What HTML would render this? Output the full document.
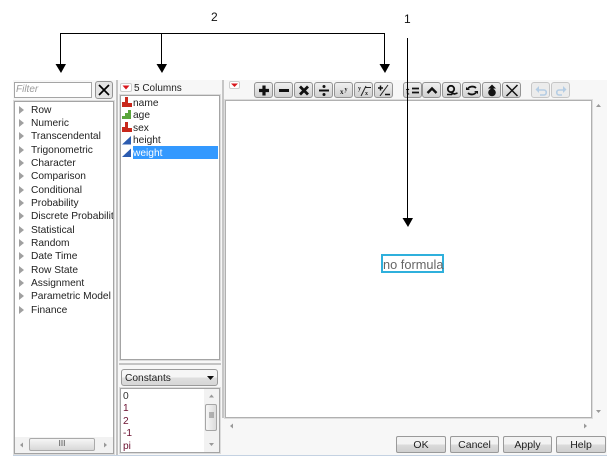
<!DOCTYPE html>
<html><head><meta charset="utf-8">
<style>
html,body{margin:0;padding:0;background:#fff}
body{width:610px;height:457px;position:relative;overflow:hidden;font-family:"Liberation Sans",sans-serif;font-size:10.2px;color:#222}
#w{position:absolute;left:0;top:0;width:610px;height:457px;filter:blur(.3px)}
.a{position:absolute}
.box{position:absolute;background:#fff;border:1px solid #a4a4a4;box-shadow:0 0 0 1px #dcdcdc;box-sizing:border-box}
.t{position:absolute;white-space:nowrap;line-height:13px}
.tri{position:absolute;width:0;height:0;border-style:solid;border-width:4px 0 4px 5px;border-color:transparent transparent transparent #a0a0a0}
.btn{position:absolute;top:82px;width:19px;height:16px;box-sizing:border-box;border:1px solid #949494;border-radius:3px;background:linear-gradient(#f0f0f0,#d0d0d0);overflow:hidden}
.btn svg{position:absolute;left:0;top:0}
.pb{position:absolute;top:436px;height:17px;box-sizing:border-box;border:1px solid #9a9a9a;border-radius:2px;background:linear-gradient(#f3f3f3 45%,#dadada 55%,#cfcfcf);text-align:center;font-size:10.5px;line-height:16px;color:#222}
.k{position:absolute;background:#000}
.c{position:absolute;left:123px;font-size:10.2px;color:#6a1030;line-height:12px}
</style></head><body><div id="w">
<div class="a" style="left:13px;top:80px;width:594px;height:375px;background:#f7f7f7"></div>
<div class="a" style="left:13px;top:455px;width:594px;height:1px;background:#c4d2e2"></div>
<div class="a" style="left:116px;top:80px;width:2px;height:375px;background:#c4c4c4"></div>
<div class="a" style="left:222px;top:80px;width:2px;height:338px;background:#c6c6c6"></div>

<div class="box" style="left:14px;top:82px;width:78px;height:16px;border-color:#a5a5a5;box-shadow:none"></div>
<div class="t" style="left:16px;top:83px;font-style:italic;color:#9b9b9b;font-size:10px">Filter</div>
<div class="btn" style="left:95px;top:81px;width:18px;height:18px;background:#e4e4e4"><svg width="16" height="16"><path d="M3 3L13 13M13 3L3 13" stroke="#000" stroke-width="1.700"/></svg></div>

<div class="box" style="left:14px;top:101px;width:100px;height:353px;overflow:hidden">
<div class="t" style="left:16px;top:2px">Row</div>
<div class="t" style="left:16px;top:15px">Numeric</div>
<div class="t" style="left:16px;top:28px">Transcendental</div>
<div class="t" style="left:16px;top:42px">Trigonometric</div>
<div class="t" style="left:16px;top:55px">Character</div>
<div class="t" style="left:16px;top:68px">Comparison</div>
<div class="t" style="left:16px;top:82px">Conditional</div>
<div class="t" style="left:16px;top:95px">Probability</div>
<div class="t" style="left:16px;top:108px">Discrete Probability</div>
<div class="t" style="left:16px;top:122px">Statistical</div>
<div class="t" style="left:16px;top:135px">Random</div>
<div class="t" style="left:16px;top:148px">Date Time</div>
<div class="t" style="left:16px;top:162px">Row State</div>
<div class="t" style="left:16px;top:175px">Assignment</div>
<div class="t" style="left:16px;top:188px">Parametric Model</div>
<div class="t" style="left:16px;top:202px">Finance</div>
<div class="tri" style="left:4px;top:4px"></div>
<div class="tri" style="left:4px;top:17px"></div>
<div class="tri" style="left:4px;top:30px"></div>
<div class="tri" style="left:4px;top:44px"></div>
<div class="tri" style="left:4px;top:57px"></div>
<div class="tri" style="left:4px;top:70px"></div>
<div class="tri" style="left:4px;top:84px"></div>
<div class="tri" style="left:4px;top:97px"></div>
<div class="tri" style="left:4px;top:110px"></div>
<div class="tri" style="left:4px;top:124px"></div>
<div class="tri" style="left:4px;top:137px"></div>
<div class="tri" style="left:4px;top:150px"></div>
<div class="tri" style="left:4px;top:164px"></div>
<div class="tri" style="left:4px;top:177px"></div>
<div class="tri" style="left:4px;top:190px"></div>
<div class="tri" style="left:4px;top:204px"></div>
<div class="a" style="left:0;top:335px;width:98px;height:16px;background:#f2f2f2"></div>
<div class="a" style="left:14px;top:336px;width:66px;height:13px;box-sizing:border-box;border:1px solid #aaa;border-radius:2px;background:linear-gradient(#f6f6f6,#d8d8d8);text-align:center;font-size:8px;line-height:10px;color:#444">III</div>
<svg class="a" style="left:0;top:335px" width="98" height="16"><path d="M5 8l3-2.500v5zM92 8l-3-2.500v5z" fill="#999"/></svg>
</div>

<div class="a" style="left:120px;top:83px;width:12px;height:9px;background:#fff;border:1px solid #ccc;border-radius:2px;box-sizing:border-box"></div>
<svg class="a" style="left:120px;top:83px" width="12" height="9"><path d="M2.500 2.500h7L6 6.500z" fill="#d8161c"/></svg>
<div class="t" style="left:134px;top:82px;font-size:10px">5 Columns</div>

<div class="box" style="left:120px;top:95px;width:100px;height:265px"></div>
<div class="a" style="left:133px;top:146px;width:85px;height:13px;background:#3399ff"></div>
<div class="t" style="left:133px;top:97px">name</div>
<div class="t" style="left:133px;top:109px">age</div>
<div class="t" style="left:133px;top:122px">sex</div>
<div class="t" style="left:133px;top:134px">height</div>
<div class="t" style="left:133px;top:147px;color:#fff">weight</div>
<svg class="a" style="left:121px;top:96px" width="12" height="64">
<path d="M1 6h3v5H1zM4 1h3v10H4zM7 7h4v4H7z" fill="#c8281c"/>
<path d="M1 20h3v3H1zM4 17h3v6H4zM7 14h3v9H7z" fill="#5aa63c"/>
<path d="M1 31h3v5H1zM4 26h3v10H4zM7 32h4v4H7z" fill="#c8281c"/>
<path d="M1 48.500L10 40V48.500z" fill="#2c5cb0"/>
<path d="M1 61L10 52.500V61z" fill="#2c5cb0"/>
</svg>

<div class="a" style="left:119px;top:363px;width:102px;height:2px;background:#c4c4c4"></div>
<div class="a" style="left:121px;top:369px;width:97px;height:17px;box-sizing:border-box;border:1px solid #9a9a9a;border-radius:3px;background:linear-gradient(#f6f6f6 45%,#dedede 55%,#d6d6d6)"></div>
<div class="t" style="left:125px;top:372px;font-size:10.2px">Constants</div>
<svg class="a" style="left:206px;top:375px" width="10" height="6"><path d="M1 1h7L4.500 5z" fill="#111"/></svg>
<div class="box" style="left:120px;top:388px;width:100px;height:65px"></div>
<div class="a" style="left:204px;top:389px;width:15px;height:63px;background:#f2f2f2"></div>
<div class="a" style="left:205px;top:404px;width:12px;height:27px;box-sizing:border-box;border:1px solid #a5a5a5;border-radius:2px;background:linear-gradient(90deg,#f6f6f6,#dcdcdc)"></div>
<svg class="a" style="left:204px;top:389px" width="15" height="63"><path d="M5 8.500l2.500-3 2.500 3zM5 54l2.500 3 2.500-3z" fill="#999"/><path d="M5 24h5M5 26h5M5 28h5" stroke="#777" stroke-width="1"/></svg>
<div class="c" style="top:391px;color:#333">0</div>
<div class="c" style="top:403px">1</div>
<div class="c" style="top:416px">2</div>
<div class="c" style="top:428px">-1</div>
<div class="c" style="top:441px">pi</div>

<div class="a" style="left:229px;top:81px;width:11px;height:8px;background:#fff;border:1px solid #ccc;border-radius:2px;box-sizing:border-box"></div>
<svg class="a" style="left:229px;top:81px" width="11" height="8"><path d="M2 2.500h7L5.500 6z" fill="#d8161c"/></svg>

<div class="btn" style="left:254px"><svg width="18" height="15"><path d="M9 2.500v10M4 7.500h10" stroke="#111" stroke-width="3.200"/></svg></div>
<div class="btn" style="left:274px"><svg width="18" height="15"><path d="M4 7.500h10" stroke="#111" stroke-width="3"/></svg></div>
<div class="btn" style="left:294px"><svg width="18" height="15"><path d="M5 3.500l8 8M13 3.500l-8 8" stroke="#111" stroke-width="2.800"/></svg></div>
<div class="btn" style="left:314px"><svg width="18" height="15"><path d="M4 7.500h10" stroke="#111" stroke-width="2"/><circle cx="9" cy="3.500" r="1.500" fill="#111"/><circle cx="9" cy="11.500" r="1.500" fill="#111"/></svg></div>
<div class="btn" style="left:334px"><svg width="18" height="15"><text x="5" y="11" font-size="7" font-weight="bold" font-family="Liberation Serif" fill="#222">x</text><text x="9.500" y="8" font-size="6" font-weight="bold" font-family="Liberation Serif" fill="#222">y</text></svg></div>
<div class="btn" style="left:354px"><svg width="18" height="15"><text x="3" y="7" font-size="6" font-weight="bold" font-family="Liberation Serif" fill="#222">y</text><path d="M6 13L11 3" stroke="#222"/><text x="10" y="12" font-size="6" font-weight="bold" font-family="Liberation Serif" fill="#222">x</text><path d="M10 4.500h6" stroke="#222"/></svg></div>
<div class="btn" style="left:374px"><svg width="18" height="15"><path d="M3 5h5M5.500 2.500v5M10 11.500h5" stroke="#111" stroke-width="1.500"/><path d="M5 13L13 2" stroke="#222"/></svg></div>

<div class="btn" style="left:403px"><svg width="18" height="15"><text x="2" y="11.500" font-size="10" font-weight="bold" font-family="Liberation Sans" fill="#111">t</text><path d="M8 5.500h7M8 9.500h7" stroke="#111" stroke-width="1.700"/></svg></div>
<div class="btn" style="left:422px"><svg width="18" height="15"><path d="M4.500 10L9 5.500 13.500 10" stroke="#111" stroke-width="2.400" fill="none"/></svg></div>
<div class="btn" style="left:442px"><svg width="18" height="15"><circle cx="8" cy="6" r="3.200" stroke="#111" stroke-width="1.800" fill="none"/><path d="M4 11.500h4.500l1-1.500 2 1 3-1" stroke="#111" stroke-width="1.600" fill="none"/></svg></div>
<div class="btn" style="left:462px"><svg width="18" height="15"><path d="M13 5C11 3 7 3 5 5.500M5 10C7 12 11 12 13 9.500" stroke="#111" stroke-width="1.800" fill="none"/><path d="M3 4l4 3H3zM15 11l-4-3h4z" fill="#111"/></svg></div>
<div class="btn" style="left:482px"><svg width="18" height="15"><path d="M9 1.500l4 4h-2.500v2h-3v-2H5z" fill="#111"/><circle cx="9" cy="9.500" r="3.800" fill="#111"/></svg></div>
<div class="btn" style="left:502px"><svg width="18" height="15"><path d="M3.500 2L14.500 13M14.500 2L3.500 13" stroke="#111" stroke-width="1.500"/></svg></div>
<div class="btn" style="left:531px;border-color:#c6c6c6;background:#ececec"><svg width="18" height="15"><path d="M6 7h6c3 0 3 5 0 5H8" stroke="#b5cde4" stroke-width="1.600" fill="none"/><path d="M7 3L3.500 6.500 7 10z" fill="#b5cde4"/></svg></div>
<div class="btn" style="left:551px;border-color:#c6c6c6;background:#ececec"><svg width="18" height="15"><path d="M12 7H7c-3 0-3 5 0 5h3" stroke="#b5cde4" stroke-width="1.600" fill="none"/><path d="M11 3L14.500 6.500 11 10z" fill="#b5cde4"/></svg></div>

<div class="box" style="left:225px;top:100px;width:367px;height:318px;border-color:#b0b0b0"></div>
<svg class="a" style="left:592px;top:100px" width="15" height="335"><path d="M4 7l2.500-3 2.500 3zM4 310l2.500 3 2.500-3z" fill="#999"/></svg>
<svg class="a" style="left:225px;top:420px" width="375" height="12"><path d="M5 6l3-2.500v5zM359 3.500l3 2.500-3 2.500z" fill="#999"/></svg>

<div class="a" style="left:381px;top:254px;width:63px;height:19px;box-sizing:border-box;border:2px solid #2fb0dc;background:#fff"></div>
<div class="t" style="left:383px;top:257px;font-size:12.800px;line-height:15px;color:#666">no formula</div>

<div class="pb" style="left:396px;width:50px">OK</div>
<div class="pb" style="left:450px;width:49px">Cancel</div>
<div class="pb" style="left:503px;width:49px">Apply</div>
<div class="pb" style="left:556px;width:50px">Help</div>

<div class="t" style="left:211px;top:11px;font-size:12px;color:#111">2</div>
<div class="t" style="left:404px;top:13px;font-size:12px;color:#111">1</div>
<div class="k" style="left:60px;top:33px;width:325px;height:1px"></div>
<div class="k" style="left:60px;top:33px;width:1px;height:33px"></div>
<div class="k" style="left:161px;top:33px;width:1px;height:33px"></div>
<div class="k" style="left:384px;top:33px;width:1px;height:33px"></div>
<div class="k" style="left:407px;top:38px;width:1px;height:181px"></div>
<svg class="a" style="left:0;top:0" width="610" height="457"><path d="M55.500 64h10.500l-5 9zM156.500 64h10.500l-5 9zM379.500 64h10.500l-5 9zM402.500 218h10.500l-5 9z" fill="#000"/></svg>
</div></body></html>
